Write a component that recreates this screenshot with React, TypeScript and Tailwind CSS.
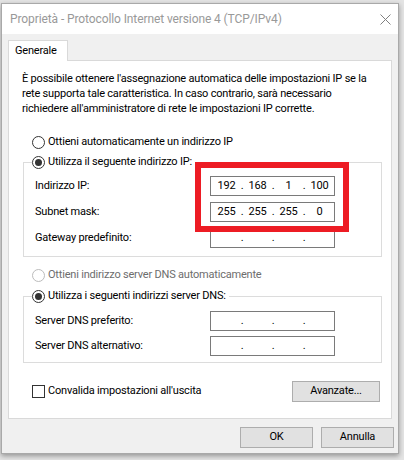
type RadioProps = { label: string; checked?: boolean; disabled?: boolean };

function Radio({ label, checked, disabled }: RadioProps) {
  return (
    <div className="flex h-4 items-center gap-[3px]">
      <span
        className={`flex h-[13px] w-[13px] items-center justify-center rounded-full border bg-white ${
          disabled ? "border-[#bcbcbc]" : "border-[#333333]"
        }`}
      >
        {checked && <span className="h-[7px] w-[7px] rounded-full bg-[#333333]" />}
      </span>
      <span className={disabled ? "text-[#6d6d6d]" : "text-black"}>{label}</span>
    </div>
  );
}

function IpBox({ value }: { value?: string[] }) {
  const parts = value ?? ["", "", "", ""];
  return (
    <div className="flex h-5 w-[125px] items-center border border-[#7a7a7a] bg-white pl-[2px] text-black">
      {parts.map((p, i) => (
        <div key={i} className="flex items-center">
          <span className="w-[27px] text-center">{p}</span>
          {i < 3 && <span className="w-[4px] text-center">.</span>}
        </div>
      ))}
    </div>
  );
}

function Field({ label, value }: { label: string; value?: string[] }) {
  return (
    <div className="flex h-5 items-center">
      <span className="w-[175px]">{label}</span>
      <IpBox value={value} />
    </div>
  );
}

function Button({ label, w }: { label: string; w: string }) {
  return (
    <button
      className={`flex h-[21px] items-center justify-center border border-[#adadad] bg-[#e1e1e1] text-black ${w}`}
    >
      {label}
    </button>
  );
}

export default function App() {
  return (
    <div
      className="h-[460px] w-[404px] overflow-hidden bg-[#e4e4e4] text-[11px] tracking-[-0.2px] text-black"
      style={{ fontFamily: "Roboto, 'Liberation Sans', sans-serif" }}
    >
      <div className="mt-[3px] ml-[1px] flex h-[451px] w-[398px] flex-col border border-[#a9a9a9] bg-[#f0f0f0] shadow-[0_2px_5px_rgba(0,0,0,0.35)]">
        {/* title bar */}
        <div className="flex h-[30px] items-center justify-between bg-white pl-[8px] pr-[7px]">
          <span className="text-[12px] tracking-[-0.1px] text-[#999999]">
            Proprietà - Protocollo Internet versione 4 (TCP/IPv4)
          </span>
          <svg width="11" height="11" viewBox="0 0 11 11">
            <path d="M0.5 0.5 L10.5 10.5 M10.5 0.5 L0.5 10.5" stroke="#808080" strokeWidth="1" fill="none" />
          </svg>
        </div>

        <div className="flex flex-col px-[6px] pt-[6px]">
          {/* tab */}
          <div className="relative z-10 -mb-px flex h-[21px] w-[60px] items-center border border-b-0 border-[#d9d9d9] bg-white pl-[6px]">
            Generale
          </div>

          {/* panel */}
          <div className="relative flex h-[359px] flex-col border border-[#d9d9d9] bg-white">
            <p className="pt-[10px] pl-[13px] leading-[15px]">
              È possibile ottenere l'assegnazione automatica delle impostazioni IP se la
              <br />
              rete supporta tale caratteristica. In caso contrario, sarà necessario
              <br />
              richiedere all'amministratore di rete le impostazioni IP corrette.
            </p>

            <div className="mt-[18px] pl-[23px]">
              <Radio label="Ottieni automaticamente un indirizzo IP" />
            </div>

            <fieldset className="mt-[4px] ml-[14px] w-[359px] border border-[#dcdcdc] pb-[8px] pl-[11px]">
              <legend className="-ml-[3px] pr-[3px]">
                <Radio label="Utilizza il seguente indirizzo IP:" checked />
              </legend>
              <div className="mt-[6px] flex flex-col gap-[6px]">
                <Field label="Indirizzo IP:" value={["192", "168", "1", "100"]} />
                <Field label="Subnet mask:" value={["255", "255", "255", "0"]} />
                <Field label="Gateway predefinito:" />
              </div>
            </fieldset>

            <div className="mt-[10px] pl-[23px]">
              <Radio label="Ottieni indirizzo server DNS automaticamente" disabled />
            </div>

            <fieldset className="mt-[5px] ml-[14px] w-[359px] border border-[#dcdcdc] pb-[6px] pl-[11px]">
              <legend className="-ml-[3px] pr-[3px]">
                <Radio label="Utilizza i seguenti indirizzi server DNS:" checked />
              </legend>
              <div className="mt-[7px] flex flex-col gap-[5px]">
                <Field label="Server DNS preferito:" />
                <Field label="Server DNS alternativo:" />
              </div>
            </fieldset>

            <div className="mt-[18px] flex items-center justify-between pr-[11px] pl-[23px]">
              <div className="flex items-center gap-[3px]">
                <span className="h-[13px] w-[13px] border border-[#333333] bg-white" />
                <span>Convalida impostazioni all'uscita</span>
              </div>
              <Button label="Avanzate..." w="w-[88px]" />
            </div>

            {/* annotation */}
            <div className="absolute top-[101px] left-[186px] h-[70px] w-[154px] border-[6px] border-[#ed1c24]" />
          </div>

          <div className="-mr-[2px] mt-[8px] flex justify-end gap-[8px]">
            <Button label="OK" w="w-[73px]" />
            <Button label="Annulla" w="w-[73px]" />
          </div>
        </div>
      </div>
    </div>
  );
}
